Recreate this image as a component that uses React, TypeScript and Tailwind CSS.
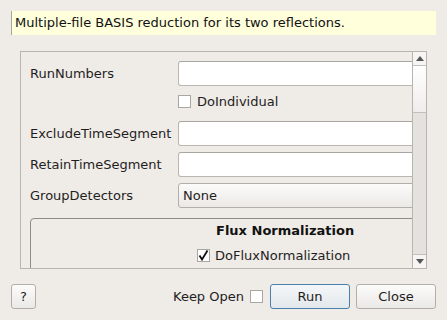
import React from "react";

const font = { fontFamily: '"DejaVu Sans", "Liberation Sans", sans-serif' };

const TextRow = ({ label, className }: { label: string; className: string }) => (
  <div className={`flex items-center h-[25px] ${className}`}>
    <span className="w-[148px] shrink-0 text-[13px] text-[#1e1e1e]">{label}</span>
    <div className="h-[25px] w-[260px] shrink-0 rounded-[3px] border border-[#b9b6b2] border-t-[#a9a6a2] bg-white" />
  </div>
);

const Check = ({ checked }: { checked?: boolean }) => (
  <div className="w-[13px] h-[13px] shrink-0 border border-[#aaa7a3] bg-white flex items-center justify-center">
    {checked && (
      <svg width="11" height="11" viewBox="0 0 11 11">
        <path d="M1.5 5.5 L4 9.5 L9.5 0.5" fill="none" stroke="#111" strokeWidth="1.8" />
      </svg>
    )}
  </div>
);

const Arrow = ({ up }: { up?: boolean }) => (
  <svg width="8" height="5" viewBox="0 0 8 5">
    <path d={up ? "M0 5 L4 0 L8 5 Z" : "M0 0 L8 0 L4 5 Z"} fill="#555" />
  </svg>
);

export default function App() {
  return (
    <div
      className="w-[447px] h-[320px] bg-[#efebe7] flex flex-col pt-[11px] px-[11px] overflow-hidden"
      style={font}
    >
      <div className="h-[24px] w-[425px] bg-[#ffffdc] border-l border-[#a9a79b] flex items-center pl-[3px] text-[13px] text-[#111]">
        Multiple-file BASIS reduction for its two reflections.
      </div>

      <div className="mt-[16px] ml-[9px] w-[407px] h-[218px] border border-[#b8b5b1] flex">
        <div className="flex-1 overflow-hidden pl-[9px] pt-[9px] flex flex-col">
          <TextRow label="RunNumbers" className="" />
          <div className="mt-[9px] h-[13px] flex items-center pl-[148px] gap-[6px]">
            <Check />
            <span className="text-[13px] text-[#1e1e1e]">DoIndividual</span>
          </div>
          <TextRow label="ExcludeTimeSegment" className="mt-[13px]" />
          <TextRow label="RetainTimeSegment" className="mt-[6px]" />
          <div className="mt-[6px] flex items-center h-[25px]">
            <span className="w-[148px] shrink-0 text-[13px] text-[#1e1e1e]">GroupDetectors</span>
            <div className="h-[25px] w-[260px] shrink-0 rounded-[3px] border border-[#b2afab] bg-gradient-to-b from-[#fbfbfa] to-[#ebe9e6] flex items-center pl-[4px] text-[13px] text-[#1e1e1e]">
              None
            </div>
          </div>
          <div className="mt-[10px] w-[430px] h-[80px] shrink-0 rounded-[4px] border border-[#8e8c89] flex flex-col">
            <div className="h-[23px] flex items-center pl-[185px] text-[13px] font-bold text-[#111]">
              Flux Normalization
            </div>
            <div className="mt-[7px] h-[13px] flex items-center pl-[166px] gap-[5px]">
              <Check checked />
              <span className="text-[13px] text-[#1e1e1e]">DoFluxNormalization</span>
            </div>
          </div>
        </div>
        <div className="w-[14px] shrink-0 border-l border-[#b8b5b1] bg-[#e4e2df] flex flex-col">
          <div className="h-[14px] border-b border-[#c4c1bd] bg-[#f6f5f4] flex items-center justify-center">
            <Arrow up />
          </div>
          <div className="h-[47px] border-b border-[#c4c1bd] bg-gradient-to-b from-[#ffffff] to-[#efedeb]" />
          <div className="flex-1" />
          <div className="h-[14px] border-t border-[#c4c1bd] bg-[#f6f5f4] flex items-center justify-center">
            <Arrow />
          </div>
        </div>
      </div>

      <div className="mt-[15px] h-[25px] flex items-center text-[13px] text-[#1e1e1e]">
        <div className="w-[25px] h-[25px] rounded-[3px] border border-[#b2afab] bg-gradient-to-b from-[#fbfbfa] to-[#ebe9e6] flex items-center justify-center">
          ?
        </div>
        <span className="ml-[137px]">Keep Open</span>
        <div className="ml-[6px]">
          <Check />
        </div>
        <div className="ml-[7px] w-[80px] h-[25px] rounded-[3px] border border-[#4a7ead] bg-gradient-to-b from-[#f4f7f9] to-[#e3e8ec] flex items-center justify-center">
          Run
        </div>
        <div className="ml-[6px] w-[80px] h-[25px] rounded-[3px] border border-[#b2afab] bg-gradient-to-b from-[#fbfbfa] to-[#ebe9e6] flex items-center justify-center">
          Close
        </div>
      </div>
    </div>
  );
}
